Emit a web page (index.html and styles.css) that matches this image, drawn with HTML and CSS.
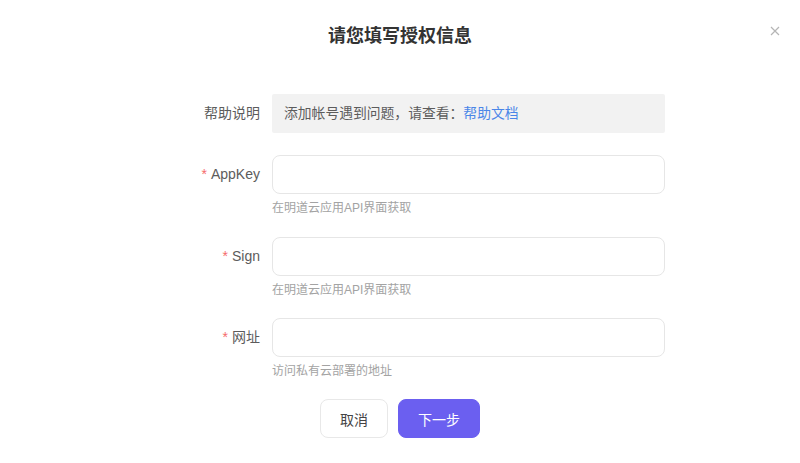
FILE: index.html
```html
<!DOCTYPE html>
<html lang="zh-CN">
<head>
    <meta charset="UTF-8">
    <title>请您填写授权信息</title>
    <link rel="stylesheet" href="styles.css">
</head>
<body>
    <div class="dialog">
        <div class="dialog-header">
            <h2 class="dialog-title">请您填写授权信息</h2>
            <span class="close" title="关闭">
                <svg width="10" height="10" viewBox="0 0 10 10">
                    <path d="M1 1L9 9M9 1L1 9" stroke="#b5b5b5" stroke-width="1.2" fill="none"/>
                </svg>
            </span>
        </div>

        <form class="form">
            <div class="form-item help-item">
                <label class="form-label">帮助说明</label>
                <div class="help-box">添加帐号遇到问题，请查看：<a href="#">帮助文档</a></div>
            </div>

            <div class="form-item first">
                <label class="form-label"><span class="required">*</span>AppKey</label>
                <div class="form-field">
                    <input type="text" class="input">
                    <div class="hint">在明道云应用API界面获取</div>
                </div>
            </div>

            <div class="form-item">
                <label class="form-label"><span class="required">*</span>Sign</label>
                <div class="form-field">
                    <input type="text" class="input">
                    <div class="hint">在明道云应用API界面获取</div>
                </div>
            </div>

            <div class="form-item">
                <label class="form-label"><span class="required">*</span>网址</label>
                <div class="form-field">
                    <input type="text" class="input">
                    <div class="hint">访问私有云部署的地址</div>
                </div>
            </div>

            <div class="actions">
                <button type="button" class="btn cancel">取消</button>
                <button type="button" class="btn primary">下一步</button>
            </div>
        </form>
    </div>
</body>
</html>
```

FILE: styles.css
```css
body {
    margin: 0;
    background-color: #fff;
    font-family: "Liberation Sans", Arial, "Noto Sans CJK SC", sans-serif;
    color: #333;
}

.dialog {
    width: 800px;
    height: 463px;
    box-sizing: border-box;
    padding-top: 24px;
}

.dialog-header {
    position: relative;
}

.dialog-title {
    margin: 0;
    text-align: center;
    font-size: 18px;
    line-height: 24px;
    font-weight: bold;
    color: #333;
}

.close {
    position: absolute;
    right: 20px;
    top: -2px;
    cursor: pointer;
}

.form {
    margin-top: 46px;
    margin-left: 160px;
    width: 505px;
}

.form-item {
    display: flex;
    gap: 12px;
    margin-bottom: 20px;
}

.form-item.help-item {
    align-items: center;
    margin-bottom: 22px;
}

.form-item.first {
    margin-bottom: 21px;
}

.form-label {
    width: 100px;
    flex-shrink: 0;
    text-align: right;
    font-size: 14px;
    line-height: 39px;
    color: #5c5c5c;
}

.required {
    color: #f56c6c;
    margin-right: 4px;
}

.help-box {
    flex: 1;
    height: 39px;
    line-height: 39px;
    padding-left: 12px;
    background-color: #f2f2f2;
    border-radius: 2px;
    font-size: 13.8px;
    color: #5c5c5c;
}

.help-box a {
    color: #4a86e8;
    text-decoration: none;
}

.form-field {
    flex: 1;
}

.input {
    display: block;
    width: 100%;
    height: 39px;
    box-sizing: border-box;
    border: 1px solid #e6e6e6;
    border-radius: 8px;
    outline: none;
    padding: 0 12px;
    font-size: 14px;
}

.hint {
    margin-top: 6px;
    font-size: 12px;
    line-height: 16px;
    color: #a3a3a3;
}

.actions {
    display: flex;
    justify-content: center;
    gap: 10px;
    margin-left: -160px;
    width: 800px;
}

.btn {
    height: 39px;
    padding: 0;
    border: 1px solid #e8e8e8;
    border-radius: 8px;
    background-color: #fff;
    font-family: "Noto Sans CJK SC", sans-serif;
    font-size: 14px;
    color: #444;
    cursor: pointer;
}

.btn.cancel {
    width: 68px;
}

.btn.primary {
    width: 82px;
    border-color: #6b5ff0;
    background-color: #6b5ff0;
    color: #fff;
}
```
